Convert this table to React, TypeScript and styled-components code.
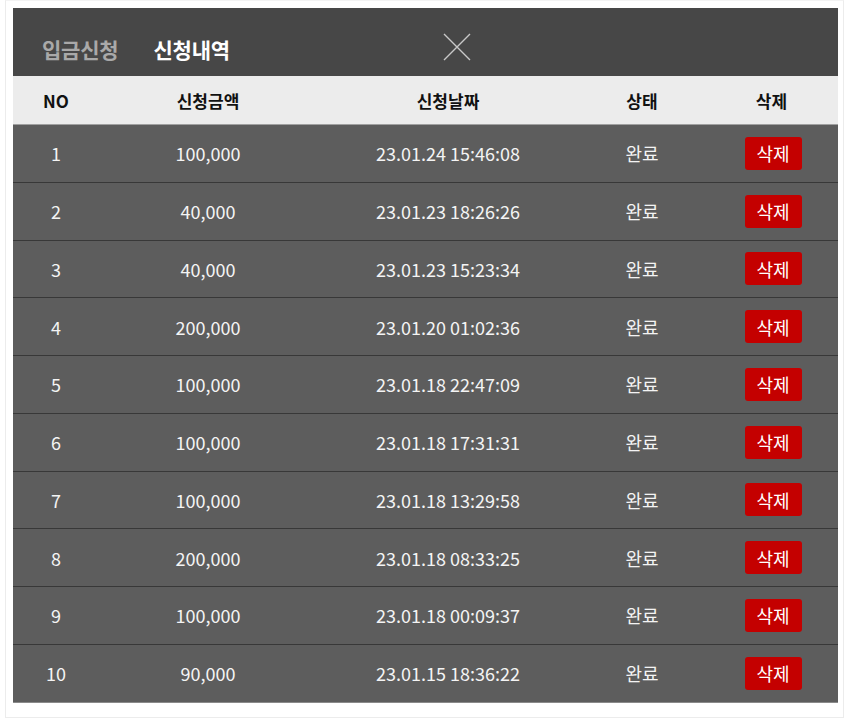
import styled, { createGlobalStyle } from "styled-components";

type Request = {
  no: number;
  amount: string;
  date: string;
  status: string;
};

const REQUESTS: Request[] = [
  { no: 1, amount: "100,000", date: "23.01.24 15:46:08", status: "완료" },
  { no: 2, amount: "40,000", date: "23.01.23 18:26:26", status: "완료" },
  { no: 3, amount: "40,000", date: "23.01.23 15:23:34", status: "완료" },
  { no: 4, amount: "200,000", date: "23.01.20 01:02:36", status: "완료" },
  { no: 5, amount: "100,000", date: "23.01.18 22:47:09", status: "완료" },
  { no: 6, amount: "100,000", date: "23.01.18 17:31:31", status: "완료" },
  { no: 7, amount: "100,000", date: "23.01.18 13:29:58", status: "완료" },
  { no: 8, amount: "200,000", date: "23.01.18 08:33:25", status: "완료" },
  { no: 9, amount: "100,000", date: "23.01.18 00:09:37", status: "완료" },
  { no: 10, amount: "90,000", date: "23.01.15 18:36:22", status: "완료" },
];

const App = () => {
  return (
    <>
      <GlobalStyle />
      <Frame>
        <Panel>
          <Header>
            <Tab>입금신청</Tab>
            <Tab $active>신청내역</Tab>
            <CloseButton aria-label="close">
              <svg width="30" height="30" viewBox="0 0 30 30">
                <path
                  d="M2 2 L28 28 M28 2 L2 28"
                  stroke="#c8c8c8"
                  strokeWidth="1.4"
                  fill="none"
                />
              </svg>
            </CloseButton>
          </Header>
          <HeadRow>
            <HeadCell>NO</HeadCell>
            <HeadCell>신청금액</HeadCell>
            <HeadCell>신청날짜</HeadCell>
            <HeadCell>상태</HeadCell>
            <HeadCell>삭제</HeadCell>
          </HeadRow>
          {REQUESTS.map((r) => (
            <BodyRow key={r.no}>
              <Cell>{r.no}</Cell>
              <Cell>{r.amount}</Cell>
              <Cell>{r.date}</Cell>
              <Cell>{r.status}</Cell>
              <Cell>
                <DeleteButton>삭제</DeleteButton>
              </Cell>
            </BodyRow>
          ))}
        </Panel>
      </Frame>
    </>
  );
};

const GlobalStyle = createGlobalStyle`
  body {
    margin: 0;
    background: #ffffff;
    font-family: "Noto Sans CJK KR", "Noto Sans", sans-serif;
  }
`;

const Frame = styled.div`
  width: 839px;
  margin-left: 5px;
  padding: 7px 7px 14px;
  border: 1px solid #ececec;
  border-top-color: #f3f3f3;
  box-sizing: border-box;
`;

const Panel = styled.div`
  width: 825px;
`;

const Header = styled.div`
  display: flex;
  align-items: center;
  height: 68px;
  padding: 14px 0 0 29px;
  background: #474747;
  box-sizing: border-box;
`;

const Tab = styled.div<{ $active?: boolean }>`
  font-size: 21px;
  font-weight: 700;
  letter-spacing: -0.2px;
  color: ${(p) => (p.$active ? "#ffffff" : "#a9a9a9")};
  margin-right: 35px;
`;

const CloseButton = styled.div`
  display: flex;
  margin-left: 177px;
  margin-top: -4px;
`;

const columns = "86px 218px 262px 126px 133px";

const HeadRow = styled.div`
  display: grid;
  grid-template-columns: ${columns};
  height: 49px;
  background: #ececec;
  border-bottom: 1px solid #a0a0a0;
  box-sizing: border-box;
`;

const HeadCell = styled.div`
  display: flex;
  align-items: center;
  justify-content: center;
  font-size: 17px;
  font-weight: 700;
  color: #111111;
`;

const BodyRow = styled.div`
  display: grid;
  grid-template-columns: ${columns};
  height: 57.75px;
  background: #5d5d5d;
  border-bottom: 1px solid #383838;
  box-sizing: border-box;

  &:last-child {
    border-bottom-color: #8a8a8a;
  }
`;

const Cell = styled.div`
  display: flex;
  align-items: center;
  justify-content: center;
  font-size: 18px;
  color: #f4f4f4;
`;

const DeleteButton = styled.div`
  display: flex;
  align-items: center;
  justify-content: center;
  width: 57px;
  height: 33px;
  border-radius: 3px;
  background: #c40000;
  color: #ffffff;
  font-size: 18px;
  margin-left: 3px;
`;

export default App;
